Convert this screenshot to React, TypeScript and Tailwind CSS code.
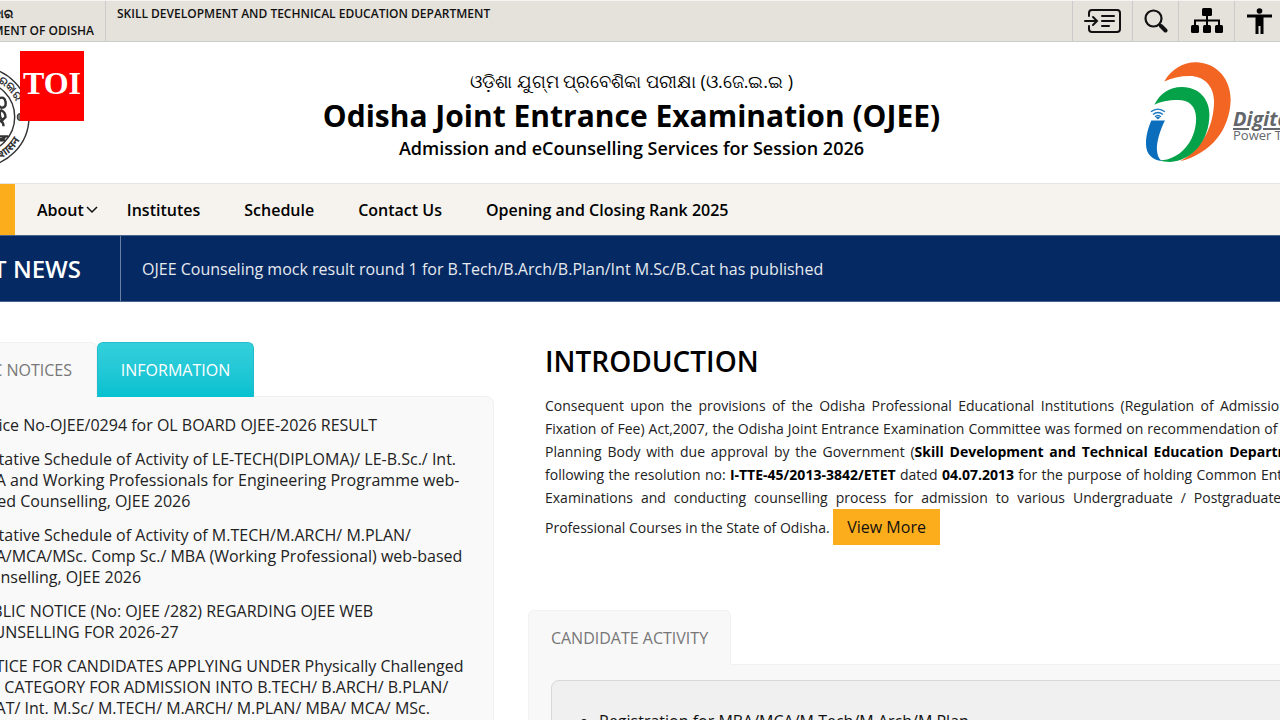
import { ReactNode } from "react";

const menu = ["Institutes", "Schedule", "Contact Us", "Opening and Closing Rank 2025"];

const notices = [
  "Notice No-OJEE/0294 for OL BOARD OJEE-2026 RESULT",
  "Tentative Schedule of Activity of LE-TECH(DIPLOMA)/ LE-B.Sc./ Int. MBA and Working Professionals for Engineering Programme web-based Counselling, OJEE 2026",
  "Tentative Schedule of Activity of M.TECH/M.ARCH/ M.PLAN/ MBA/MCA/MSc. Comp Sc./ MBA (Working Professional) web-based Counselling, OJEE 2026",
  "PUBLIC NOTICE (No: OJEE /282) REGARDING OJEE WEB COUNSELLING FOR 2026-27",
  "NOTICE FOR CANDIDATES APPLYING UNDER Physically Challenged (PC) CATEGORY FOR ADMISSION INTO B.TECH/ B.ARCH/ B.PLAN/ B.CAT/ Int. M.Sc/ M.TECH/ M.ARCH/ M.PLAN/ MBA/ MCA/ MSc. Comp Sc.",
];

function Tool({ label, className, children }: { label: string; className: string; children: ReactNode }) {
  return (
    <button aria-label={label} className={`flex h-full items-center justify-center border-l border-[#cbcbcb] ${className}`}>
      {children}
    </button>
  );
}

function Seal() {
  return (
    <svg viewBox="-50 -50 100 100" className="h-[102px] w-[102px]" fill="none" stroke="#333">
      <circle r="49" strokeWidth="1.4" />
      <circle r="35" strokeWidth="1.4" />
      <defs>
        <path id="ring-top" d="M-39 0 A39 39 0 0 1 39 0" />
        <path id="ring-bottom" d="M-46 0 A46 46 0 0 0 46 0" />
      </defs>
      <g fill="#333" stroke="none" fontSize="11" fontWeight="700">
        <text textAnchor="middle"><textPath href="#ring-top" startOffset="50%">ଓଡ଼ିଶା ଶାସନ ସରକାର</textPath></text>
        <text textAnchor="middle"><textPath href="#ring-bottom" startOffset="62%">ओडिशा शासन</textPath></text>
      </g>
      <circle cx="41" cy="0" r="3.5" fill="#777" />
      <path d="M-28 19H29M-26 23H26" strokeWidth="2" />
      <path d="M20 22Q24 23 25 19" strokeWidth="3" />
      <path d="M19 -18q6 -3 7 3t-4 6q-5 -3 -3 -9zM21 -7q5 2 5 7l-3 3q-4 -3 -2 -10M20 4q4 0 4 5" strokeWidth="2.4" />
    </svg>
  );
}

function IndiaLogo() {
  return (
    <svg viewBox="0 0 280 310" className="h-[103px] w-[93px] shrink-0">
      <path fill="#f26522" d="M73 62C95 22 135 2 172 4C235 8 273 57 273 117C270 207 215 277 120 302C187 267 222 197 223 122C222 72 190 45 150 45C120 45 95 51 73 62Z" />
      <path fill="#06a24a" d="M43 132C60 97 90 77 128 78C180 79 209 117 209 160C209 242 155 300 90 304C78 304 67 303 60 299C120 297 169 242 169 172C168 132 145 117 115 117C85 117 60 122 43 132Z" />
      <path fill="#0a6ebd" d="M34 179H75C59 212 50 244 51 267C52 285 58 295 66 301C38 298 18 282 18 249C18 222 25 202 34 179Z" />
      <g fill="none" stroke="#1a77c0" strokeWidth="4">
        <path d="M33 153Q54 137 75 153M39 161Q54 149 69 161M45 168Q54 160 63 168" />
        <path fill="#1a77c0" stroke="none" d="M47 170Q54 165 61 170L54 176Z" />
      </g>
    </svg>
  );
}

export default function App() {
  return (
    <div className="relative h-screen overflow-hidden bg-white font-['Open_Sans','Noto_Sans',sans-serif] text-black">
      {/* page is wider than the window and runs off both edges */}
      <div className="-ml-[90px] -mr-[73px]">
        <div className="flex h-[42px] border-b border-t border-b-[#cbcbcb] border-t-[#f4f4f2] bg-[#e5e1db] pr-[73px] text-xs font-semibold text-[#111]">
          <div className="flex w-[196px] justify-end border-r border-[#cbcbcb] pr-[11px] pt-1 leading-[17px]">
            <div className="whitespace-nowrap">
              <div>ଓଡ଼ିଶା ସରକାର</div>
              <div>GOVERNMENT OF ODISHA</div>
            </div>
          </div>
          <div className="flex-1 pl-[11px] pt-1 leading-[17px]">SKILL DEVELOPMENT AND TECHNICAL EDUCATION DEPARTMENT</div>
          <Tool label="Skip to content" className="w-[60px]">
            <svg viewBox="0 0 38 26" className="h-[26px] w-[38px]" fill="none" stroke="#111" strokeWidth="2" strokeLinecap="round">
              <path d="M5 8V5Q5 2 8 2H33Q36 2 36 5V21Q36 24 33 24H8Q5 24 5 21V18" />
              <path d="M1 13H12M9 9L13 13L9 17M18 8H30M18 13H30M18 18H25" />
            </svg>
          </Tool>
          <Tool label="Search" className="w-[46px]">
            <svg viewBox="0 0 24 24" className="h-6 w-6" fill="none" stroke="#111" strokeLinecap="round">
              <circle cx="9.500" cy="9.500" r="8" strokeWidth="2.200" />
              <path d="M15.500 15.500L17 17" strokeWidth="2" />
              <path d="M17 17L21.500 21.500" strokeWidth="4" />
            </svg>
          </Tool>
          <Tool label="Sitemap" className="w-[56px]">
            <svg viewBox="0 0 34 26" className="h-[26px] w-[34px]">
              <rect x="12" y="0" width="10" height="8" rx="1.500" />
              <path d="M17 8V17M5 17V12.500H29V17" fill="none" stroke="#000" strokeWidth="2" />
              <rect x="1" y="17" width="8" height="8" rx="1.500" />
              <rect x="13" y="17" width="8" height="8" rx="1.500" />
              <rect x="25" y="17" width="8" height="8" rx="1.500" />
            </svg>
          </Tool>
          <Tool label="Accessibility" className="w-[46px] pl-1">
            <svg viewBox="0 0 25 26" className="h-[26px] w-[25px]">
              <circle cx="12.500" cy="3" r="2.800" />
              <path d="M0 6.500H25V9.500H16.500V26H13.500V18H11.500V26H8.500V9.500H0Z" />
            </svg>
          </Tool>
        </div>

        <header className="flex h-[141px] items-center justify-between px-[18px]">
          <div className="w-[240px] pt-2">
            <Seal />
          </div>
          <div className="text-center">
            <div className="text-lg leading-[30px]">ଓଡ଼ିଶା ଯୁଗ୍ମ ପ୍ରବେଶିକା ପରୀକ୍ଷା (ଓ.ଜେ.ଇ.ଇ )</div>
            <h1 className="text-[30px] font-bold leading-[40px]">Odisha Joint Entrance Examination (OJEE)</h1>
            <div className="text-lg font-semibold leading-6">Admission and eCounselling Services for Session 2026</div>
          </div>
          <div className="flex w-[240px] items-center justify-end">
            <div className="flex w-[195px] items-center">
              <IndiaLogo />
              <div className="whitespace-nowrap pt-7 text-[#63676b]">
                <div className="text-xl font-bold italic leading-4 underline underline-offset-2">Digital India</div>
                <div className="text-[13px] leading-4">Power To Empower</div>
              </div>
            </div>
          </div>
        </header>

        <nav className="flex h-[52px] items-center border-t border-[#e6e6e6] bg-[#f6f3ee] text-base font-semibold">
          <a href="#" className="flex h-full w-[105px] items-center justify-center bg-[#fcad1c]">Home</a>
          <a href="#" className="ml-[22px] flex items-center gap-0.5">
            About
            <svg viewBox="0 0 12 8" className="h-2 w-3" fill="none" stroke="#111" strokeWidth="1.500">
              <path d="M1 1L6 6L11 1" />
            </svg>
          </a>
          <div className="ml-[29px] flex gap-11">
            {menu.map((item) => (
              <a key={item} href="#">{item}</a>
            ))}
          </div>
        </nav>

        <div className="flex h-[67px] items-center border-y border-[#4a638f] bg-[#052962] text-white">
          <h2 className="flex h-full w-[211px] items-center justify-end border-r border-[#697fa4] pr-[39px] text-2xl font-semibold">LATEST NEWS</h2>
          <a href="#" className="pl-[21px] text-base text-[#e6eaf1]">OJEE Counseling mock result round 1 for B.Tech/B.Arch/B.Plan/Int M.Sc/B.Cat has published</a>
        </div>

        <main className="flex gap-[34px] pl-[22px] pr-[17px] pt-10">
          <section className="w-[562px] shrink-0">
            <div className="relative -mb-px flex h-[55px] text-base">
              <button className="flex w-[165px] items-center justify-end rounded-t-md border border-b-0 border-[#f1f1f1] bg-[#f9f9f9] pr-6 text-[#777]">PUBLIC NOTICES</button>
              <button className="w-[157px] rounded-t-md border border-b-0 border-[#22bdca] bg-linear-to-b from-[#33cfdc] to-[#05c1d0] text-white">INFORMATION</button>
            </div>
            <ul className="h-[400px] space-y-[13px] rounded-tr-lg border border-[#f0f0f0] bg-[#f9f9f9] pl-[38px] pr-[22px] pt-[18px] text-base leading-[21px] text-[#222]">
              {notices.map((n) => (
                <li key={n}><a href="#">{n}</a></li>
              ))}
            </ul>
          </section>

          <section className="min-w-0 flex-1">
            <div className="h-[268px] px-[17px]">
              <h2 className="text-[28px] font-semibold leading-[38px]">INTRODUCTION</h2>
              <p className="pt-3.5 text-justify text-sm leading-[23px] text-[#222]">
                Consequent upon the provisions of the Odisha Professional Educational Institutions (Regulation of Admission and Fixation of Fee) Act,2007, the Odisha Joint Entrance Examination Committee was formed on recommendation of Policy Planning Body with due approval by the Government (<b className="text-black">Skill Development and Technical Education Department</b>) following the resolution no: <b className="text-black">I-TTE-45/2013-3842/ETET</b> dated <b className="text-black">04.07.2013</b> for the purpose of holding Common Entrance Examinations and conducting counselling process for admission to various Undergraduate / Postgraduate level Professional Courses in the State of Odisha.{" "}
                <a href="#" className="inline-block bg-[#fcad1c] px-3.5 py-1.5 text-base leading-6 text-[#111]">View More</a>
              </p>
            </div>
            <div className="relative -mb-px flex h-[55px] text-base">
              <button className="w-[203px] rounded-t-md border border-b-0 border-[#f1f1f1] bg-[#f8f8f8] text-[#777]">CANDIDATE ACTIVITY</button>
            </div>
            <div className="border border-[#f1f1f1] bg-[#f8f8f8] px-[22px] py-[15px]">
              <ul className="list-disc rounded-lg border border-[#d8d8d8] bg-[#f0f0f0] pb-8 pl-[47px] pt-7 text-base leading-6 text-[#111]">
                <li><a href="#">Registration for MBA/MCA/M.Tech/M.Arch/M.Plan</a></li>
              </ul>
            </div>
          </section>
        </main>
      </div>

      {/* publisher badge */}
      <div className="absolute left-5 top-[51px] flex h-[70px] w-16 items-center justify-center bg-[#f00] pb-1.5 font-['Liberation_Serif',serif] text-[32px] font-bold text-white">TOI</div>
    </div>
  );
}
